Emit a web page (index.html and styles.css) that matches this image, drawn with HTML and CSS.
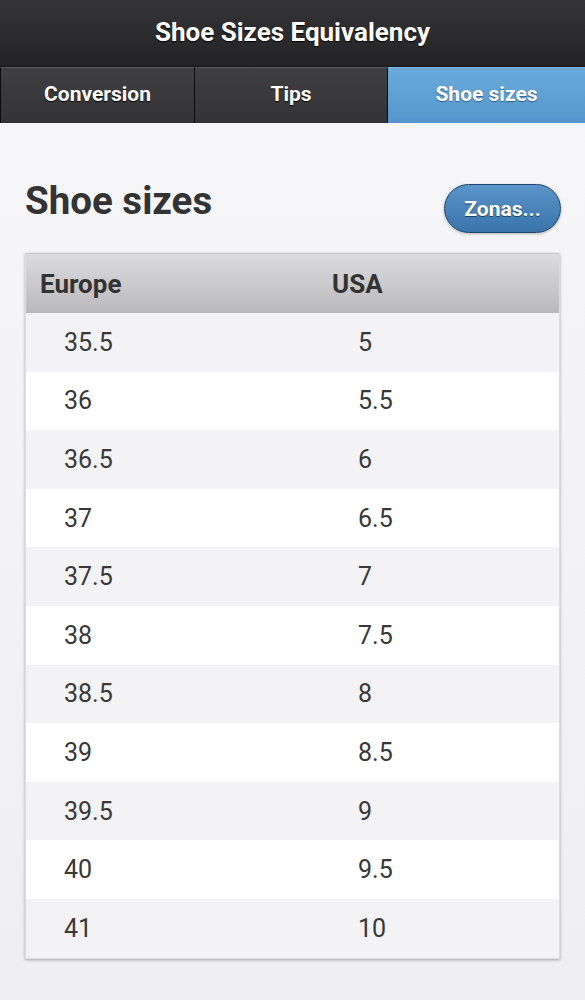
FILE: index.html
```html
<!DOCTYPE html>
<html>
<head>
<meta charset="utf-8">
<link rel="stylesheet" href="styles.css">
</head>
<body>
<div class="header">Shoe Sizes Equivalency</div>
<div class="tabs">
  <div class="tab">Conversion</div>
  <div class="tab">Tips</div>
  <div class="tab active">Shoe sizes</div>
</div>
<div class="content">
  <div class="titlebar">
    <h1>Shoe sizes</h1>
    <div class="btn">Zonas...</div>
  </div>
  <div class="table">
    <div class="thead"><div class="c1">Europe</div><div class="c2">USA</div></div>
    <div class="row"><div class="c1">35.5</div><div class="c2">5</div></div>
    <div class="row"><div class="c1">36</div><div class="c2">5.5</div></div>
    <div class="row"><div class="c1">36.5</div><div class="c2">6</div></div>
    <div class="row"><div class="c1">37</div><div class="c2">6.5</div></div>
    <div class="row"><div class="c1">37.5</div><div class="c2">7</div></div>
    <div class="row"><div class="c1">38</div><div class="c2">7.5</div></div>
    <div class="row"><div class="c1">38.5</div><div class="c2">8</div></div>
    <div class="row"><div class="c1">39</div><div class="c2">8.5</div></div>
    <div class="row"><div class="c1">39.5</div><div class="c2">9</div></div>
    <div class="row"><div class="c1">40</div><div class="c2">9.5</div></div>
    <div class="row"><div class="c1">41</div><div class="c2">10</div></div>
  </div>
</div>
</body>
</html>
```
FILE: styles.css
```css
html, body { margin: 0; padding: 0; }
body {
  font-family: Roboto, "Noto Sans", sans-serif;
  background: #efeef1;
  width: 585px;
  height: 1000px;
  overflow: hidden;
}
.header {
  height: 66px;
  background: linear-gradient(#353437, #232224);
  color: #fff;
  font-weight: 700;
  font-size: 26px;
  display: flex;
  align-items: center;
  justify-content: center;
  text-shadow: 0 1px 1px #000;
  box-sizing: border-box;
  padding-bottom: 3px;
}
.tabs {
  display: flex;
  height: 57px;
  background: #111;
  border-top: 1px solid #1a1a1a;
  box-sizing: border-box;
}
.tab {
  flex: 1;
  display: flex;
  align-items: center;
  justify-content: center;
  color: #fff;
  font-weight: 700;
  font-size: 21px;
  padding-bottom: 4px;
  background: linear-gradient(#404042, #333235);
  border-top: 1px solid #5a5a5c;
  border-right: 1px solid #0c0c0c;
  text-shadow: 0 1px 1px #000;
}
.tab:first-child { flex: 0 0 193px; border-left: 1px solid #0c0c0c; }
.tab:nth-child(2) { flex: 0 0 192px; }
.tab.active {
  flex: 1;
  border-right: none;
  background: linear-gradient(#6aa9da, #5597cc);
  border-top: 1px solid #7cb6e2;
  text-shadow: 0 1px 1px #2f5f88;
}
.content {
  padding: 0 25px 0 25px;
  background: linear-gradient(#f6f5f8, #efeef1);
}
.titlebar {
  display: flex;
  align-items: flex-start;
  justify-content: space-between;
  padding-top: 61px;
  padding-bottom: 20px;
}
h1 {
  margin: -5px 0 0 0;
  font-size: 38.5px;
  line-height: 44px;
  font-weight: 700;
  color: #333;
}
.btn {
  width: 117px;
  height: 49px;
  margin-right: -1px;
  box-sizing: border-box;
  border-radius: 25px;
  border: 1px solid #1d4569;
  background: linear-gradient(#5a94c8, #3a74ab);
  color: #fff;
  font-weight: 700;
  font-size: 21px;
  display: flex;
  align-items: center;
  justify-content: center;
  text-shadow: 0 1px 1px #1e3f5e;
  box-shadow: 0 1px 3px rgba(0,0,0,0.25);
}
.table {
  box-shadow: 0 1px 3px rgba(0,0,0,0.3);
  border: 1px solid #dcdcde;
  border-top: none;
}
.thead {
  display: flex;
  align-items: center;
  height: 60px;
  background: linear-gradient(#dcdcde, #b9b9bb);
  border-top: 1px solid #c8c8ca;
  box-sizing: border-box;
  font-weight: 700;
  font-size: 26px;
  color: #333;
}
.thead .c1 { width: 292px; padding-left: 14px; }
.row {
  display: flex;
  align-items: center;
  height: 58.6px;
  font-size: 25px;
  color: #383838;
  background: #f3f2f5;
}
.row:nth-child(odd) { background: #fff; }
.row .c1 { width: 294px; padding-left: 38px; }
```
